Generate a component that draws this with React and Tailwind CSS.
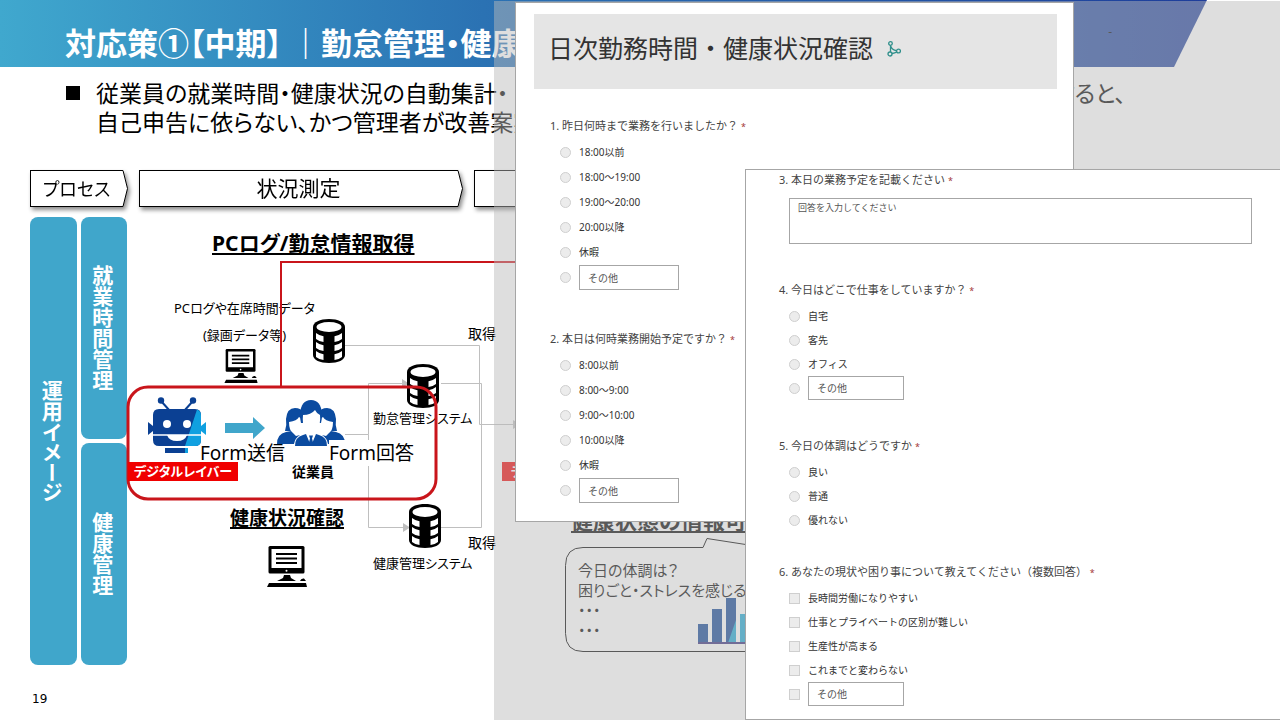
import { clsx } from 'clsx';

const SLIDE_FONT = "font-['Noto_Sans','Noto_Sans_CJK_JP',sans-serif] [font-feature-settings:'palt']";
const FORM_FONT = "font-['Noto_Sans','Noto_Sans_CJK_JP',sans-serif] [font-feature-settings:normal]";

const LEFT_QUESTIONS = [
  {
    id: 'q1',
    title: '1. 昨日何時まで業務を行いましたか？',
    options: ['18:00以前', '18:00～19:00', '19:00～20:00', '20:00以降', '休暇'],
    other: true,
  },
  {
    id: 'q2',
    title: '2. 本日は何時業務開始予定ですか？',
    options: ['8:00以前', '8:00～9:00', '9:00～10:00', '10:00以降', '休暇'],
    other: true,
  },
];

function DatabaseIcon({ className }) {
  return (
    <svg viewBox="0 0 32 44" className={className} aria-hidden="true">
      <path d="M0 8C0 3 7 0 16 0s16 3 16 8v28c0 5-7 8-16 8S0 41 0 36z" fill="#000" />
      <ellipse cx="16" cy="8" rx="12.5" ry="5" fill="#fff" />
      {[14, 23, 32].map((y) => (
        <g key={y} fill="#fff">
          <path d={`M3 ${y}q3 2.500 7.500 3.200v5.800q-4.500-.6-7.500-3z`} />
          <path d={`M29 ${y}q-3 2.500-7.500 3.200v5.800q4.500-.6 7.500-3z`} />
        </g>
      ))}
    </svg>
  );
}

function MonitorIcon({ className }) {
  return (
    <svg viewBox="0 0 40 41" className={className} aria-hidden="true">
      <path d="M3 0h33q1.500 0 1.500 1.500v24.500q0 1.500-1.500 1.500H3q-1.500 0-1.500-1.500V1.500Q1.500 0 3 0z" fill="#000" />
      <path d="M4.500 3h30v19h-30z" fill="#fff" />
      <path d="M9 8h21M9 12.500h21M9 17h21" stroke="#000" strokeWidth="2" />
      <circle cx="19.500" cy="24.800" r="1" fill="#fff" />
      <path d="M17 29h6l1 3 5 3H10l6-3z" />
      <path d="M2 37h37l1 4H0zM33 35q1-3 4-2.500l2 2.500z" />
    </svg>
  );
}

function RobotIcon({ className }) {
  return (
    <svg viewBox="0 0 60 58" className={className} aria-hidden="true">
      <g fill="#0b4093">
        <path d="M14 4l9 10M46 4l-9 10" stroke="#0b4093" strokeWidth="2" />
        <circle cx="14" cy="3.500" r="3.200" />
        <circle cx="46" cy="3.500" r="3.200" />
        <path d="M12 12h36q6 0 6 6v25q0 6-6 6H12q-6 0-6-6V18q0-6 6-6z" />
        <path d="M1 25l5 4v5l-5 4z" />
        <path d="M18 51h23v5H18z" />
      </g>
      <path d="M50 12.500q4 1.500 4 6V43q0 6-6 6H38z" fill="#10a0e0" />
      <path d="M54 29l5-4v13l-5-4z" fill="#10a0e0" />
      <path d="M38 51h3v5h-3z" fill="#10a0e0" />
      <circle cx="20" cy="27" r="4" fill="#fff" />
      <circle cx="40" cy="27" r="4" fill="#fff" />
      <path d="M6 38h48" stroke="#fff" strokeWidth="1.500" />
      <path d="M20 38h20q-2 6-10 6t-10-6z" fill="#fff" />
    </svg>
  );
}

function PeopleIcon({ className }) {
  return (
    <svg viewBox="0 0 68 46" className={className} aria-hidden="true">
      {['', 'matrix(-1 0 0 1 68 0)'].map((side) => (
        <g key={side} transform={side}>
          <path d="M8 31q2-6 1-12Q10 8 18 8q6 0 9 5v18z" fill="#0b4ba0" />
          <path d="M12 22q8-1 10-5l6 4v13l-6 4-6-4q-4-4-4-12z" fill="#fff" />
          <path d="M0 44q0-10 9-12l5-1 5 5 4-1q-5 3-6 9z" fill="#0b4ba0" />
        </g>
      ))}
      <path d="M24 23q-1-3-1-9Q24 0 34 0t11 14q0 6-1 9z" fill="#0b4ba0" />
      <path d="M26 15q8 0 12-5 2 4 5 5 1 9-3 15-6 6-12 0-3-6-2-15z" fill="#fff" />
      <path d="M18 46q0-9 8-11l3-1 5 12 5-12 3 1q8 2 8 11z" fill="#0b4ba0" />
      <path d="M32 35.500h4l-1 3 2 7.500h-6l2-7.500z" fill="#0b4ba0" />
    </svg>
  );
}

function BranchIcon() {
  return (
    <svg viewBox="0 0 14 16" className="h-4 w-[14px]" fill="none" stroke="#2f8f8b" strokeWidth="1.300" aria-hidden="true">
      <circle cx="3.500" cy="2.500" r="1.800" />
      <circle cx="3" cy="13" r="2" />
      <circle cx="11.500" cy="10" r="1.900" />
      <path d="M3.500 4.500V11M4 5.500q1 3.500 5.500 4.200M5 12.500q3-.5 4.800-1.600" />
    </svg>
  );
}

function ChartIcon({ className }) {
  return (
    <svg viewBox="0 0 84 46" className={className} aria-hidden="true">
      <path d="M0 26h10v19H0zM14 11h10v34H14zM28 0h10v45H28z" fill="#0b4093" />
      <path d="M38 22v23h-8zM42 16h10v29H42zM56 8h10v37H56z" fill="#18a6d4" />
      <path d="M0 45h84" stroke="#302878" strokeWidth="2" />
    </svg>
  );
}

function Step({ children, className }) {
  return (
    <li className={clsx('flex h-[37px] drop-shadow-[2px_3px_2px_rgba(0,0,0,0.45)]', className)}>
      <span className="flex flex-1 items-center justify-center border-y border-l border-black bg-white">
        {children}
      </span>
      <svg viewBox="0 0 6 37" className="h-[37px] w-[6px]" aria-hidden="true">
        <path d="M0 .5h1l4.500 18L1 36.500H0" fill="#fff" stroke="#000" />
      </svg>
    </li>
  );
}

function Rail({ children, className }) {
  return (
    <div className={clsx('flex items-center justify-center rounded-lg bg-[#40a6cb] pr-[6px] text-[21px] font-bold text-white', className)}>
      <span className="[writing-mode:vertical-rl] [font-feature-settings:'vpal']">{children}</span>
    </div>
  );
}

function Connectors() {
  return (
    <svg viewBox="0 0 620 450" className="absolute top-0 left-0 h-[450px] w-[620px]" fill="none" aria-hidden="true">
      <g stroke="#bfbfbf">
        <path d="M218 128.500h134.500v79H388" />
        <path d="M314 166.500h40.500v144H314" />
        <path d="M218 217.500h23.500v-51H276M241.500 217.500v93H278" />
      </g>
      <path d="M275 162l7 4.500-7 4.500zM276 306l7 4.500-7 4.500zM386 203l8 4.500-8 4.500z" fill="#bfbfbf" />
    </svg>
  );
}

function RedFrame() {
  return (
    <svg viewBox="0 0 620 450" className="absolute top-0 left-0 h-[450px] w-[620px] overflow-visible" fill="none" stroke="#c9151b" aria-hidden="true">
      <path d="M154 170V45h300" strokeWidth="2" />
      <rect x="1" y="170" width="308" height="112" rx="20" strokeWidth="3" />
    </svg>
  );
}

function Callout() {
  return (
    <div className="absolute top-[321px] left-[438px]">
      <svg viewBox="0 0 400 114" className="h-[114px] w-[400px]" fill="none" stroke="#000" aria-hidden="true">
        <path d="M18 9.500h120l4-9L200 9.500h180q18 0 18 18v68q0 18-18 18H18q-17.500 0-17.500-18v-68q0-18 17.500-18z" />
      </svg>
      <p className="absolute top-[22px] left-[13px] text-[15px] leading-[20px] whitespace-nowrap">
        今日の体調は？
        <br />
        困りごと・ストレスを感じること
        <br />
        ・・・
        <br />
        ・・・
      </p>
      <ChartIcon className="absolute top-[60px] left-[133px] h-[46px] w-[84px]" />
    </div>
  );
}

function Diagram() {
  return (
    <div className="relative flex-1">
      <Connectors />
      <h2 className="absolute top-[13px] left-[85px] text-[21px] leading-[26px] font-bold whitespace-nowrap underline decoration-2 underline-offset-2">
        PCログ/勤怠情報取得
      </h2>
      <p className="absolute top-[78px] left-[47px] text-center text-[13px] leading-[27px] whitespace-nowrap">
        PCログや在席時間データ
        <br />
        (録画データ等)
      </p>
      <MonitorIcon className="absolute top-[132px] left-[97px] h-[34px] w-[34px]" />
      <DatabaseIcon className="absolute top-[102px] left-[186px] h-[44px] w-8" />
      <DatabaseIcon className="absolute top-[147px] left-[280px] h-[44px] w-8" />
      <DatabaseIcon className="absolute top-[287px] left-[282px] h-[44px] w-8" />
      <p className="absolute top-[107px] left-[341px] text-sm whitespace-nowrap">取得</p>
      <p className="absolute top-[316px] left-[341px] text-sm whitespace-nowrap">取得</p>
      <p className="absolute top-[191px] left-[246px] text-[13px] leading-5 whitespace-nowrap">勤怠管理システム</p>
      <p className="absolute top-[336px] left-[246px] text-[13px] leading-5 whitespace-nowrap">健康管理システム</p>

      <RedFrame />
      <RobotIcon className="absolute top-[180px] left-[20px] h-[58px] w-[60px]" />
      <svg viewBox="0 0 40 22" className="absolute top-[200px] left-[98px] h-[22px] w-10" aria-hidden="true">
        <path d="M0 6h28V0l12 11-12 11v-6H0z" fill="#40a6cb" />
      </svg>
      <PeopleIcon className="absolute top-[183px] left-[150px] h-[46px] w-[68px]" />
      <p className="absolute top-[223px] left-[73px] text-[19px] leading-[26px] whitespace-nowrap">Form送信</p>
      <p className="absolute top-[223px] left-[202px] bg-white text-[19px] leading-[26px] whitespace-nowrap">Form回答</p>
      <p className="absolute top-[245px] left-[1px] flex h-[19px] w-[110px] items-center justify-center bg-[#f00000] text-[13px] font-bold whitespace-nowrap text-white">
        デジタルレイバー
      </p>
      <p className="absolute top-[245px] left-[165px] text-sm font-bold whitespace-nowrap">従業員</p>
      <p className="absolute top-[245px] left-[375px] flex h-[19px] items-center bg-[#f00000] px-[9px] text-[13px] font-bold whitespace-nowrap text-white">
        デジタルレイバー
      </p>

      <h2 className="absolute top-[288px] left-[103px] text-[19px] leading-[26px] font-bold whitespace-nowrap underline decoration-2 underline-offset-2">
        健康状況確認
      </h2>
      <MonitorIcon className="absolute top-[329px] left-[140px] h-[41px] w-10" />
      <h2 className="absolute top-[290px] left-[444px] text-[22px] leading-[26px] font-bold whitespace-nowrap underline decoration-2 underline-offset-2">
        健康状態の情報可視化
      </h2>
      <Callout />
    </div>
  );
}

function Question({ id, title, options, type = 'radio', other, className, rowClass = 'h-[25px]', inputClass = 'h-[25px] w-[100px]' }) {
  const box = clsx(
    'size-[11px] shrink-0 appearance-none border border-[#cfcfcf] bg-[#ececec]',
    type === 'radio' && 'rounded-full',
  );
  return (
    <fieldset className={className}>
      <legend className="mb-1 block h-5 text-[11px] leading-5 text-[#444]">
        {title} <span className="text-[9px] leading-none text-[#a4373a]">*</span>
      </legend>
      <div className="pl-[10px] text-[10px] text-[#333]">
        {options.map((label) => (
          <label key={label} className={clsx('flex items-center gap-2', rowClass)}>
            <input type={type} name={id} className={box} />
            {label}
          </label>
        ))}
        {other && (
          <div className={clsx('flex items-center gap-2', rowClass)}>
            <input type={type} name={id} aria-label="その他" className={box} />
            <input
              type="text"
              aria-label="その他"
              placeholder="その他"
              className={clsx('border border-[#a6a6a6] bg-white px-2 placeholder:text-[#555]', inputClass)}
            />
          </div>
        )}
      </div>
    </fieldset>
  );
}

function WorkForm() {
  return (
    <form className={clsx('absolute top-px left-[21px] w-[559px] border border-[#a6a6a6] bg-white pt-[11px] pb-[18px]', FORM_FONT)}>
      <h2 className="mr-4 ml-[18px] flex h-[75px] items-center gap-[14px] bg-[#e5e5e5] pb-[6px] pl-[14px] text-[25px] text-[#333]">
        日次勤務時間・健康状況確認
        <BranchIcon />
      </h2>
      <div className="mt-[27px] flex flex-col gap-[39px] pl-[34px]">
        {LEFT_QUESTIONS.map((q) => (
          <Question key={q.id} {...q} />
        ))}
      </div>
    </form>
  );
}

function HealthForm() {
  return (
    <form className={clsx('absolute top-[168px] right-0 left-[251px] border-y border-l border-[#a6a6a6] bg-white pb-[13px] pl-[33px]', FORM_FONT)}>
      <label htmlFor="plan" className="block h-5 text-[11px] leading-5 text-[#444]">
        3. 本日の業務予定を記載ください <span className="text-[9px] leading-none text-[#a4373a]">*</span>
      </label>
      <div className="mt-2 mr-7 ml-[10px] flex">
        <textarea
          id="plan"
          placeholder="回答を入力してください"
          className="h-[46px] flex-1 resize-none border border-[#a6a6a6] bg-white px-2 py-[2px] text-[9px] placeholder:text-[#555]"
        />
      </div>
      <Question
        id="q4"
        className="mt-9"
        title="4. 今日はどこで仕事をしていますか？"
        options={['自宅', '客先', 'オフィス']}
        other
        rowClass="h-6"
        inputClass="h-6 w-24"
      />
      <Question
        id="q5"
        className="mt-9"
        title="5. 今日の体調はどうですか"
        options={['良い', '普通', '優れない']}
        rowClass="h-6"
      />
      <Question
        id="q6"
        className="mt-[30px]"
        type="checkbox"
        title="6. あなたの現状や困り事について教えてください（複数回答）"
        options={['長時間労働になりやすい', '仕事とプライベートの区別が難しい', '生産性が高まる', 'これまでと変わらない']}
        other
        rowClass="h-6"
        inputClass="h-6 w-24"
      />
    </form>
  );
}

export default function App() {
  return (
    <div className={clsx('relative min-h-screen overflow-hidden bg-white text-black', SLIDE_FONT)}>
      <header className="mr-[73px] flex h-[67px] items-center justify-between bg-linear-to-r from-[#40a8ce] via-[#2b72b3] via-40% to-[#1e3d9a] pt-5 pr-[95px] pl-[65px] text-white [clip-path:polygon(0_0,100%_0,calc(100%-33px)_100%,0_100%)]">
        <h1 className="text-[31px] font-bold whitespace-nowrap">対応策①【中期】 ｜勤怠管理・健康管理</h1>
        <span className="self-start text-xs leading-6 text-black">-</span>
      </header>

      <main className="px-[30px]">
        <div className="flex gap-4 pt-3 pl-9 text-[23px] leading-[29px] whitespace-nowrap">
          <span className="mt-[7px] size-[14px] bg-black" />
          <div className="mr-[124px] flex-1">
            <p className="flex justify-between">
              <span>従業員の就業時間・健康状況の自動集計・</span>
              <span>すると、</span>
            </p>
            <p>自己申告に依らない、かつ管理者が改善案実</p>
          </div>
        </div>

        <ol className="mt-[33px] flex gap-[11px]">
          <Step className="w-[98px] text-lg">プロセス</Step>
          <Step className="w-[324px] text-[21px]">状況測定</Step>
          <Step className="flex-1" />
        </ol>

        <div className="mt-[10px] flex">
          <div className="flex h-[448px] gap-1">
            <Rail className="w-[47px]">運用イメージ</Rail>
            <div className="flex w-[46px] flex-col gap-1">
              <Rail className="flex-1">就業時間管理</Rail>
              <Rail className="flex-1">健康管理</Rail>
            </div>
          </div>
          <Diagram />
        </div>
      </main>

      <footer className="px-8 pt-[26px] pb-3 font-['DejaVu_Sans',sans-serif] text-xs">19</footer>

      <div className="absolute top-px right-0 bottom-0 left-[494px] bg-[#bbbbbb]/48">
        <WorkForm />
        <HealthForm />
      </div>
    </div>
  );
}
